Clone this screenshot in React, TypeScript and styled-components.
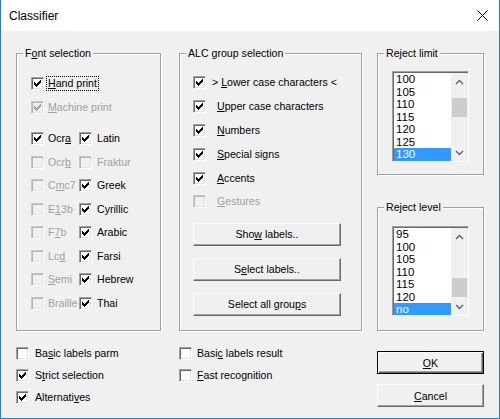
import React from 'react';
import styled, { createGlobalStyle } from 'styled-components';

const GlobalStyle = createGlobalStyle`
  html, body {
    margin: 0;
    padding: 0;
    background: #fff;
  }

  body {
    font-family: 'Liberation Sans', Arial, sans-serif;
    font-size: 10.6px;
    color: #000;
  }

  u {
    text-decoration-thickness: 1px;
    text-underline-offset: 1px;
  }
`;

const Window = styled.div`
  width: 500px;
  height: 419px;
  box-sizing: border-box;
  border: 1px solid #1883d7;
  border-top: none;
  background: #f0f0f0;
  display: flex;
  flex-direction: column;
`;

const TitleBar = styled.div`
  height: 31px;
  flex: none;
  background: #fff;
  display: flex;
  align-items: center;
  justify-content: space-between;
  padding: 0 11px 0 8px;
  font-size: 12px;
`;

const Body = styled.div`
  padding: 22px 15px 0 15px;
  display: flex;
  flex-direction: column;
`;

const TopRow = styled.div`
  display: flex;
  height: 278px;
`;

const Group = styled.section<{ $width?: number; $height: number; $offset?: number }>`
  margin-left: ${p => p.$offset || 0}px;
  box-sizing: border-box;
  width: ${p => (p.$width ? `${p.$width}px` : 'auto')};
  height: ${p => p.$height}px;
  flex: none;
  border: 1px solid #a0a0a0;
  box-shadow: 1px 1px 0 #fff, inset 1px 1px 0 #fff;
`;

const Caption = styled.div`
  width: fit-content;
  margin: -7px 0 0 6px;
  padding: 0 2px;
  line-height: 13px;
  background: #f0f0f0;
  white-space: nowrap;
`;

const GroupContent = styled.div<{ $pad: string }>`
  padding: ${p => p.$pad};
`;

const RightColumn = styled.div`
  width: 107px;
  margin-left: 15px;
  display: flex;
  flex-direction: column;
  gap: 32px;
`;

const Row = styled.div<{ $h: number }>`
  height: ${p => p.$h}px;
  display: flex;
  align-items: center;
`;

const FontGrid = styled.div`
  margin-top: 8px;
  display: grid;
  grid-template-columns: 48px 1fr;
  grid-auto-rows: 23.5px;
`;

const BoxFrame = styled.span<{ $disabled?: boolean }>`
  width: 13px;
  height: 13px;
  flex: none;
  box-sizing: border-box;
  border: 1px solid;
  border-color: ${p => (p.$disabled ? '#c8c8c8 #fff #fff #c8c8c8' : '#a0a0a0 #fff #fff #a0a0a0')};
  box-shadow: ${p => (p.$disabled ? 'inset 1px 1px 0 #b4b4b4, inset -1px -1px 0 #e3e3e3' : 'inset 1px 1px 0 #696969, inset -1px -1px 0 #e3e3e3')};
  background: ${p => (p.$disabled ? '#f0f0f0' : '#fff')};
  display: flex;
  align-items: center;
  justify-content: center;
`;

const Label = styled.span<{ $gap: number; $disabled?: boolean; $focus?: boolean }>`
  margin-left: ${p => p.$gap - (p.$focus ? 1 : 0)}px;
  padding: ${p => (p.$focus ? '0 1px' : '0')};
  outline: ${p => (p.$focus ? '1px dotted #000' : 'none')};
  line-height: 13px;
  white-space: nowrap;
  color: ${p => (p.$disabled ? '#a0a0a0' : '#000')};
`;

const Button = styled.div<{ $width: number; $default?: boolean }>`
  width: ${p => p.$width}px;
  height: 23px;
  box-sizing: border-box;
  flex: none;
  display: flex;
  align-items: center;
  justify-content: center;
  white-space: pre;
  background: #f0f0f0;
  border: 1px solid;
  border-color: ${p => (p.$default ? '#000' : '#fff #696969 #696969 #fff')};
  box-shadow: ${p =>
    p.$default
      ? 'inset 1px 1px 0 #fff, inset -1px -1px 0 #696969, inset -2px -2px 0 #a0a0a0'
      : 'inset -1px -1px 0 #a0a0a0'};
`;

const ButtonStack = styled.div<{ $gap: number }>`
  margin-top: 9px;
  display: flex;
  flex-direction: column;
  gap: ${p => p.$gap}px;
`;

const ListFrame = styled.div<{ $h: number }>`
  width: 77px;
  height: ${p => p.$h}px;
  box-sizing: border-box;
  border: 1px solid;
  border-color: #a0a0a0 #fff #fff #a0a0a0;
  box-shadow: inset 1px 1px 0 #696969;
  padding: 1px 0 0 1px;
  display: flex;
  background: #fff;
`;

const ListItems = styled.div`
  flex: 1;
  overflow: hidden;
`;

const ListItem = styled.div<{ $selected?: boolean }>`
  height: 12.5px;
  line-height: 12.5px;
  padding-left: 2px;
  font-size: 11.5px;
  background: ${p => (p.$selected ? '#3399ff' : 'transparent')};
  color: ${p => (p.$selected ? '#fff' : '#000')};
`;

const ScrollBar = styled.div`
  width: 17px;
  flex: none;
  background: #f0f0f0;
  display: flex;
  flex-direction: column;
`;

const ScrollArrow = styled.div`
  height: 17px;
  flex: none;
  display: flex;
  align-items: center;
  justify-content: center;
`;

const ScrollTrack = styled.div`
  flex: 1;
  overflow: hidden;
  display: flex;
  flex-direction: column;
  align-items: center;
`;

const Thumb = styled.div<{ $top: number }>`
  width: 15px;
  height: 19px;
  flex: none;
  margin-top: ${p => p.$top}px;
  background: #cdcdcd;
`;

const BottomRow = styled.div`
  margin-top: 11px;
  display: flex;
`;

const BottomCol = styled.div<{ $width: number }>`
  width: ${p => p.$width}px;
  display: flex;
  flex-direction: column;
`;

// 7x7 check mark bitmap, as the classic control draws it
const CHECK = [
  '......x',
  '.....xx',
  'x...xxx',
  'xx.xxx.',
  'xxxxx..',
  '.xxx...',
  '..x....'
];

function CheckMark ({ color }: { color: string }) {
  return (
    <svg width='7' height='7' viewBox='0 0 7 7' shapeRendering='crispEdges'>
      {CHECK.flatMap((line, y) => line.split('').map((c, x) => (
        c === 'x' ? <rect key={`${x}-${y}`} x={x} y={y} width='1' height='1' fill={color} /> : null
      )))}
    </svg>
  );
}

interface CheckProps {
  checked?: boolean;
  disabled?: boolean;
  gap?: number;
  focus?: boolean;
  children: React.ReactNode;
}

function Check ({ checked, disabled, gap = 4, focus, children }: CheckProps) {
  return (
    <>
      <BoxFrame $disabled={disabled}>
        {checked && <CheckMark color={disabled ? '#a0a0a0' : '#000'} />}
      </BoxFrame>
      <Label $gap={gap} $disabled={disabled} $focus={focus}>{children}</Label>
    </>
  );
}

function Chevron ({ up }: { up?: boolean }) {
  return (
    <svg width='9' height='6' viewBox='0 0 9 6'>
      <path d={up ? 'M1 5 L4.5 1.5 L8 5' : 'M1 1 L4.5 4.5 L8 1'} stroke='#606060' strokeWidth='1.4' fill='none' />
    </svg>
  );
}

interface ListProps {
  items: string[];
  selected: string;
  thumbTop: number;
  height: number;
}

function ListBox ({ items, selected, thumbTop, height }: ListProps) {
  return (
    <ListFrame $h={height}>
      <ListItems>
        {items.map(item => (
          <ListItem key={item} $selected={item === selected}>{item}</ListItem>
        ))}
      </ListItems>
      <ScrollBar>
        <ScrollArrow><Chevron up /></ScrollArrow>
        <ScrollTrack><Thumb $top={thumbTop} /></ScrollTrack>
        <ScrollArrow><Chevron /></ScrollArrow>
      </ScrollBar>
    </ListFrame>
  );
}

interface Opt {
  label: React.ReactNode;
  checked?: boolean;
  disabled?: boolean;
}

const fontRows: [Opt, Opt][] = [
  [{ label: <>Ocr<u>a</u></>, checked: true }, { label: 'Latin', checked: true }],
  [{ label: <>Ocr<u>b</u></>, disabled: true }, { label: 'Fraktur', disabled: true }],
  [{ label: <>C<u>m</u>c7</>, disabled: true }, { label: 'Greek', checked: true }],
  [{ label: <>E<u>1</u>3b</>, disabled: true }, { label: 'Cyrillic', checked: true }],
  [{ label: <>F<u>7</u>b</>, disabled: true }, { label: 'Arabic', checked: true }],
  [{ label: <>Lc<u>d</u></>, disabled: true }, { label: 'Farsi', checked: true }],
  [{ label: <><u>S</u>emi</>, disabled: true }, { label: 'Hebrew', checked: true }],
  [{ label: 'Braille', disabled: true }, { label: 'Thai', checked: true }]
];

const alcRows: Opt[] = [
  { label: <><u>U</u>pper case characters</>, checked: true },
  { label: <><u>N</u>umbers</>, checked: true },
  { label: <><u>S</u>pecial signs</>, checked: true },
  { label: <><u>A</u>ccents</>, checked: true },
  { label: <><u>G</u>estures</>, disabled: true }
];

export default function App () {
  return (
    <>
      <GlobalStyle />
      <Window>
        <TitleBar>
          <span>Classifier</span>
          <svg width='11' height='11' viewBox='0 0 11 11'>
            <path d='M0.5 0.5 L10.5 10.5 M10.5 0.5 L0.5 10.5' stroke='#000' strokeWidth='1' />
          </svg>
        </TitleBar>
        <Body>
          <TopRow>
            <Group $width={145} $height={278}>
              <Caption>F<u>o</u>nt selection</Caption>
              <GroupContent $pad='11px 0 0 14px'>
                <Row $h={24}>
                  <Check checked focus><u>H</u>and print</Check>
                </Row>
                <Row $h={24}>
                  <Check checked disabled><u>M</u>achine print</Check>
                </Row>
                <FontGrid>
                  {fontRows.map((pair, i) => pair.map((opt, j) => (
                    <Row $h={23.5} key={`${i}-${j}`}>
                      <Check checked={opt.checked} disabled={opt.disabled} gap={j === 0 ? 4 : 5}>{opt.label}</Check>
                    </Row>
                  )))}
                </FontGrid>
              </GroupContent>
            </Group>

            <Group $width={183} $height={278} $offset={18}>
              <Caption>ALC group selection</Caption>
              <GroupContent $pad='11px 0 0 13px'>
                <Row $h={23.8}>
                  <Check checked gap={6}>&gt; <u>L</u>ower case characters &lt;</Check>
                </Row>
                {alcRows.map((opt, i) => (
                  <Row $h={23.8} key={i}>
                    <Check checked={opt.checked} disabled={opt.disabled} gap={11}>{opt.label}</Check>
                  </Row>
                ))}
                <ButtonStack $gap={12}>
                  <Button $width={148}><span>Sho<u>w</u> labels..</span></Button>
                  <Button $width={148}><span>S<u>e</u>lect labels..</span></Button>
                  <Button $width={148}><span>Select all grou<u>p</u>s</span></Button>
                </ButtonStack>
              </GroupContent>
            </Group>

            <RightColumn>
              <Group $height={122}>
                <Caption>Reject limit</Caption>
                <GroupContent $pad='11px 0 0 14px'>
                  <ListBox
                    height={91}
                    items={['100', '105', '110', '115', '120', '125', '130']}
                    selected='130'
                    thumbTop={8}
                  />
                </GroupContent>
              </Group>
              <Group $height={124}>
                <Caption>Reject level</Caption>
                <GroupContent $pad='12px 0 0 14px'>
                  <ListBox
                    height={90}
                    items={['95', '100', '105', '110', '115', '120', 'no']}
                    selected='no'
                    thumbTop={33}
                  />
                </GroupContent>
              </Group>
            </RightColumn>
          </TopRow>

          <BottomRow>
            <BottomCol $width={163}>
              <Row $h={22}><Check gap={6}>Ba<u>s</u>ic labels parm</Check></Row>
              <Row $h={22}><Check checked gap={6}>S<u>t</u>rict selection</Check></Row>
              <Row $h={22}><Check checked gap={6}>Alternati<u>v</u>es</Check></Row>
            </BottomCol>
            <BottomCol $width={198}>
              <Row $h={22}><Check gap={5}>Basi<u>c</u> labels result</Check></Row>
              <Row $h={22}><Check gap={5}><u>F</u>ast recognition</Check></Row>
            </BottomCol>
            <BottomCol $width={107}>
              <ButtonStack $gap={10}>
                <Button $width={107} $default><span><u>O</u>K</span></Button>
                <Button $width={107}><span><u>C</u>ancel</span></Button>
              </ButtonStack>
            </BottomCol>
          </BottomRow>
        </Body>
      </Window>
    </>
  );
}
